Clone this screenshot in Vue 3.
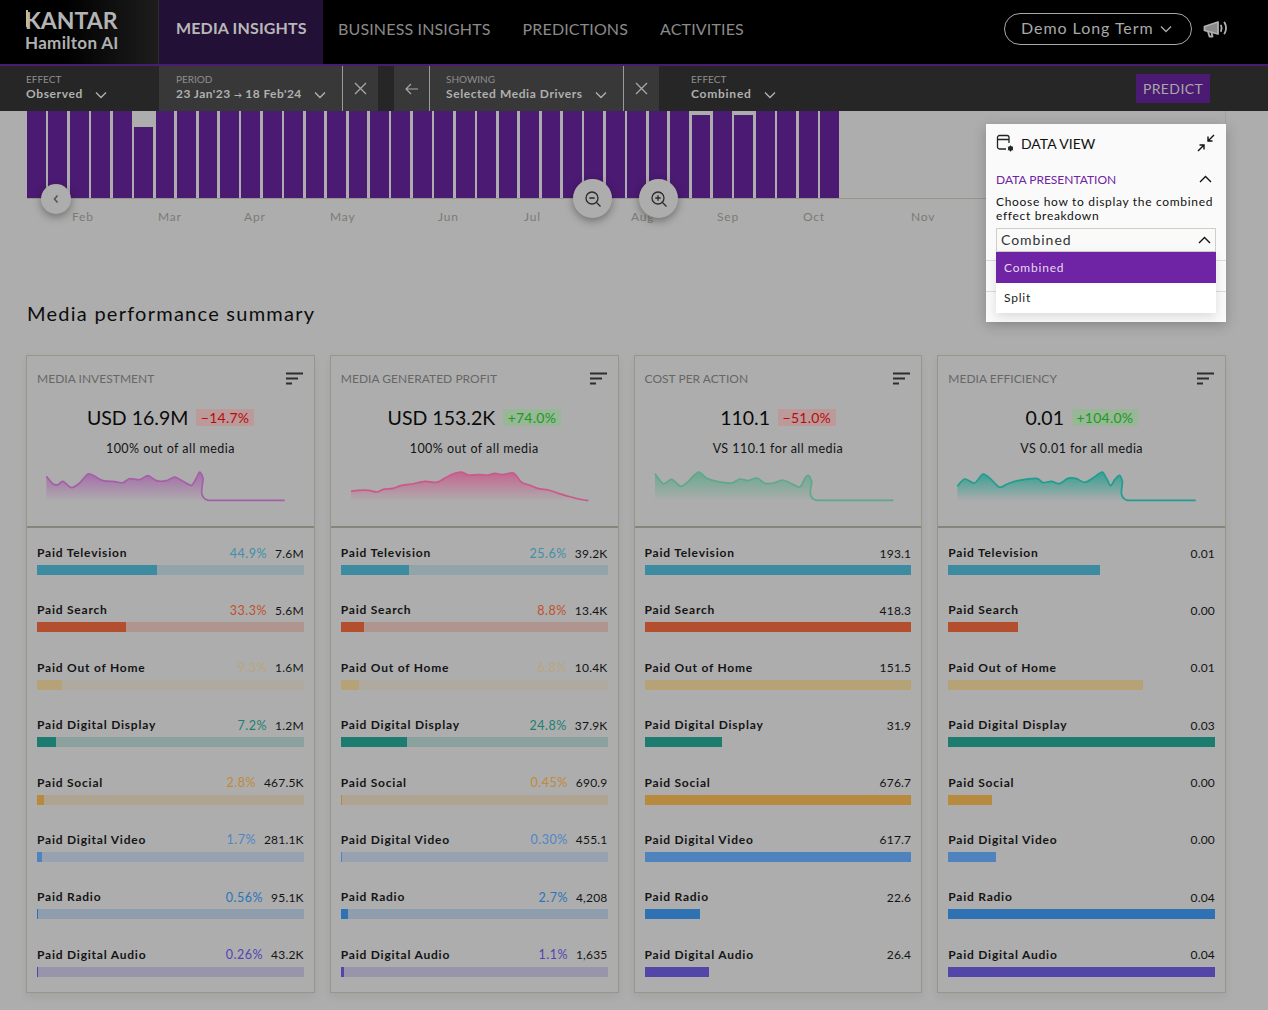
<script setup>
const barTops = { 5: 16, 31: 4, 33: 4 }
const bars = Array.from({ length: 38 }, (_, i) => ({ id: i, top: barTops[i] || 0 }))
const months = [['Feb', 72], ['Mar', 158], ['Apr', 244], ['May', 330], ['Jun', 438], ['Jul', 524], ['Aug', 631], ['Sep', 717], ['Oct', 803], ['Nov', 911]]

const channels = [
  { name: 'Paid Television', c: '#3d8ba1', p: '#4190a9' },
  { name: 'Paid Search', c: '#b34f2e', p: '#c24f2a' },
  { name: 'Paid Out of Home', c: '#b5a277', p: '#b8a67e' },
  { name: 'Paid Digital Display', c: '#1c7c6f', p: '#1b8072' },
  { name: 'Paid Social', c: '#b88a3e', p: '#c08a36' },
  { name: 'Paid Digital Video', c: '#4f83bd', p: '#4f86c6' },
  { name: 'Paid Radio', c: '#2f72b3', p: '#2a74bb' },
  { name: 'Paid Digital Audio', c: '#5246a8', p: '#5244b4' },
]

function smooth(pts) {
  let d = `M${pts[0][0]} ${pts[0][1]}`
  for (let i = 0; i < pts.length - 1; i++) {
    const p0 = pts[i - 1] || pts[i], p1 = pts[i], p2 = pts[i + 1], p3 = pts[i + 2] || p2
    if (p1[1] === 452 && p2[1] === 452) {
      d += ` L${p2[0]} ${p2[1]}`
      continue
    }
    const k = 0.14
    d += ` C${p1[0] + (p2[0] - p0[0]) * k} ${p1[1] + (p2[1] - p0[1]) * k} ${p2[0] - (p3[0] - p1[0]) * k} ${Math.min(452.5, p2[1] - (p3[1] - p1[1]) * k)} ${p2[0]} ${p2[1]}`
  }
  return d
}

const rawCards = [
  {
    title: 'MEDIA INVESTMENT', value: 'USD 16.9M', delta: '−14.7%', up: false, sub: '100% out of all media', x0: 22, color: '#a45fa8',
    pts: [[80,380],[100,403],[115,405],[130,395],[155,414],[180,400],[205,373],[225,380],[250,393],[285,396],[310,399],[330,387],[360,390],[385,378],[410,393],[440,393],[465,382],[490,395],[515,407],[530,385],[540,367],[550,385],[565,452],[795,452]],
    rows: [[44.9,'44.9%','7.6M'],[33.3,'33.3%','5.6M'],[9.3,'9.3%','1.6M'],[7.2,'7.2%','1.2M'],[2.8,'2.8%','467.5K'],[1.7,'1.7%','281.1K'],[0.56,'0.56%','95.1K'],[0.26,'0.26%','43.2K']],
  },
  {
    title: 'MEDIA GENERATED PROFIT', value: 'USD 153.2K', delta: '+74.0%', up: true, sub: '100% out of all media', x0: 18, color: '#c9598a',
    pts: [[78,425],[100,422],[130,422],[155,427],[175,419],[205,416],[230,407],[260,403],[300,395],[335,398],[360,385],[385,372],[410,367],[430,376],[460,375],[490,376],[510,371],[535,375],[565,370],[590,398],[615,407],[640,417],[670,421],[700,431],[730,440],[760,448],[790,453]],
    rows: [[25.6,'25.6%','39.2K'],[8.8,'8.8%','13.4K'],[6.8,'6.8%','10.4K'],[24.8,'24.8%','37.9K'],[0.45,'0.45%','690.9'],[0.3,'0.30%','455.1'],[2.7,'2.7%','4,208'],[1.1,'1.1%','1,635']],
  },
  {
    title: 'COST PER ACTION', value: '110.1', delta: '−51.0%', up: false, sub: 'VS 110.1 for all media', x0: 15, color: '#5fa88a',
    pts: [[75,372],[100,402],[125,389],[152,410],[175,395],[205,367],[230,386],[260,395],[305,400],[330,388],[355,393],[380,385],[405,401],[430,400],[458,391],[485,402],[510,412],[525,385],[535,377],[545,395],[560,452],[790,452]],
    rows: [[100,'','193.1'],[100,'','418.3'],[100,'','151.5'],[29,'','31.9'],[100,'','676.7'],[100,'','617.7'],[20.7,'','22.6'],[24,'','26.4']],
  },
  {
    title: 'MEDIA EFFICIENCY', value: '0.01', delta: '+104.0%', up: true, sub: 'VS 0.01 for all media', x0: 25, color: '#1f9d8e',
    pts: [[83,410],[105,388],[135,400],[160,373],[185,390],[210,413],[235,402],[265,393],[320,386],[340,399],[365,395],[390,402],[415,386],[440,387],[465,398],[490,385],[517,367],[530,385],[543,408],[555,390],[570,377],[578,395],[593,452],[798,452]],
    rows: [[57,'','0.01'],[26,'','0.00'],[73,'','0.01'],[100,'','0.03'],[16.5,'','0.00'],[18,'','0.00'],[100,'','0.04'],[100,'','0.04']],
  },
]

const cards = rawCards.map((c, i) => {
  const line = smooth(c.pts)
  const first = c.pts[0][0], last = c.pts[c.pts.length - 1][0]
  return {
    ...c,
    id: i,
    line,
    area: `${line} L${last} 455 L${first} 455 Z`,
    viewBox: `${c.x0} 340 864 135`,
    rows: c.rows.map((r, j) => ({
      ...channels[j], width: r[0], pct: r[1], val: r[2],
      track: r[1] ? `color-mix(in srgb, ${channels[j].c} 24%, transparent)` : 'transparent',
    })),
  }
})
</script>

<template>
  <div class="page">
    <header class="top">
      <div class="logo">
        <div class="kantar"><span class="k">K</span>ANTAR</div>
        <div class="hamilton">Hamilton AI</div>
      </div>
      <nav class="tabs">
        <a class="tab active">MEDIA INSIGHTS</a>
        <a class="tab">BUSINESS INSIGHTS</a>
        <a class="tab">PREDICTIONS</a>
        <a class="tab">ACTIVITIES</a>
      </nav>
      <div class="top-right">
        <div class="pill">
          <span>Demo Long Term</span>
          <svg width="12" height="8" viewBox="0 0 12 8"><path d="M1 1.500 6 6.500 11 1.500" fill="none" stroke="#a9a9a9" stroke-width="1.400"/></svg>
        </div>
        <svg class="mega" width="25" height="18" viewBox="0 0 25 18" fill="none" stroke="#b0b0b0" stroke-width="1.800" stroke-linejoin="round" stroke-linecap="round">
          <path d="M1.500 6.500 15 2v12L1.500 10.500Z" fill="#8a8a8a"/>
          <path d="M5 11.500 6.500 16.500H9.500L8.500 12.500"/>
          <path d="M18 5.500c1 2 1 3.500 0 5.500"/>
          <path d="M21.500 2.500c2 3.500 2 7.500 0 11"/>
        </svg>
      </div>
    </header>

    <div class="filters">
      <div class="seg seg-effect">
        <div class="lbl">EFFECT</div>
        <div class="val">Observed <svg class="chev" width="12" height="8" viewBox="0 0 12 8"><path d="M1 1.500 6 6.500 11 1.500" fill="none" stroke="#b0b0b0" stroke-width="1.400"/></svg></div>
      </div>
      <div class="seg seg-period">
        <div class="lbl">PERIOD</div>
        <div class="val">23 Jan'23 <span class="arrow">→</span> 18 Feb'24 <svg class="chev" width="12" height="8" viewBox="0 0 12 8"><path d="M1 1.500 6 6.500 11 1.500" fill="none" stroke="#b0b0b0" stroke-width="1.400"/></svg></div>
      </div>
      <div class="iconseg">
        <svg width="13" height="13" viewBox="0 0 13 13"><path d="M1 1 12 12M12 1 1 12" stroke="#a8a8a8" stroke-width="1.300"/></svg>
      </div>
      <div class="gapseg"></div>
      <div class="iconseg withline">
        <svg width="14" height="12" viewBox="0 0 14 12"><path d="M13 6H1M6 1 1 6 6 11" fill="none" stroke="#a8a8a8" stroke-width="1.200"/></svg>
      </div>
      <div class="seg seg-showing">
        <div class="lbl">SHOWING</div>
        <div class="val">Selected Media Drivers <svg class="chev" width="12" height="8" viewBox="0 0 12 8"><path d="M1 1.500 6 6.500 11 1.500" fill="none" stroke="#b0b0b0" stroke-width="1.400"/></svg></div>
      </div>
      <div class="iconseg">
        <svg width="13" height="13" viewBox="0 0 13 13"><path d="M1 1 12 12M12 1 1 12" stroke="#a8a8a8" stroke-width="1.300"/></svg>
      </div>
      <div class="seg seg-combined">
        <div class="lbl">EFFECT</div>
        <div class="val">Combined <svg class="chev" width="12" height="8" viewBox="0 0 12 8"><path d="M1 1.500 6 6.500 11 1.500" fill="none" stroke="#b0b0b0" stroke-width="1.400"/></svg></div>
      </div>
      <button class="predict">PREDICT</button>
    </div>

    <section class="chart">
      <div class="plot">
        <div class="bars">
          <div v-for="b in bars" :key="b.id" class="bar" :style="{ marginTop: b.top + 'px' }"></div>
        </div>
      </div>
      <div class="axis">
        <span v-for="m in months" :key="m[0]" class="tick" :style="{ left: m[1] + 'px' }">{{ m[0] }}</span>
      </div>

      <button class="round back">
        <svg width="8" height="10" viewBox="0 0 8 10"><path d="M5.500 1.500 2.500 5l3 3.500" fill="none" stroke="#555" stroke-width="1.600"/></svg>
      </button>
      <button class="round big zo">
        <svg width="18" height="18" viewBox="0 0 18 18" fill="none" stroke="#2a2a2a" stroke-width="1.300"><circle cx="8" cy="8" r="6"/><path d="M5.300 8h5.400M12.500 12.500 16.500 16.500"/></svg>
      </button>
      <button class="round big zi">
        <svg width="18" height="18" viewBox="0 0 18 18" fill="none" stroke="#2a2a2a" stroke-width="1.300"><circle cx="8" cy="8" r="6"/><path d="M5.300 8h5.400M8 5.300v5.400M12.500 12.500 16.500 16.500"/></svg>
      </button>
    </section>

    <h2 class="section-title">Media performance summary</h2>

    <section class="cards">
      <article v-for="card in cards" :key="card.id" class="card">
        <div class="card-top">
          <div class="card-head">
            <span class="card-title">{{ card.title }}</span>
            <svg width="17" height="13" viewBox="0 0 17 13"><path d="M0 1.500H17M0 6.500H12M0 11.500H6" stroke="#2e2e2e" stroke-width="1.800"/></svg>
          </div>
          <div class="headline">
            <span class="big-val">{{ card.value }}</span>
            <span class="delta" :class="card.up ? 'up' : 'down'">{{ card.delta }}</span>
          </div>
          <div class="sub">{{ card.sub }}</div>
          <svg class="spark" width="288" height="45" :viewBox="card.viewBox">
            <defs>
              <linearGradient :id="'g' + card.id" x1="0" y1="0" x2="0" y2="1">
                <stop offset="0" :stop-color="card.color" stop-opacity="0.85"/>
                <stop offset="1" :stop-color="card.color" stop-opacity="0"/>
              </linearGradient>
            </defs>
            <path :d="card.area" :fill="'url(#g' + card.id + ')'"/>
            <path :d="card.line" fill="none" :stroke="card.color" stroke-width="5"/>
          </svg>
        </div>
        <div class="rows">
          <div v-for="r in card.rows" :key="r.name" class="row">
            <div class="row-text">
              <span class="row-name">{{ r.name }}</span>
              <span class="row-nums">
                <span v-if="r.pct" class="row-pct" :style="{ color: r.p }">{{ r.pct }}</span>
                <span class="row-val">{{ r.val }}</span>
              </span>
            </div>
            <div class="track" :style="{ background: r.track }">
              <div class="fill" :style="{ width: r.width + '%', background: r.c }"></div>
            </div>
          </div>
        </div>
      </article>
    </section>

    <aside class="panel">
      <div class="panel-head">
        <svg width="19" height="19" viewBox="0 0 19 19" fill="none" stroke="#222" stroke-width="1.300">
          <path d="M10 15H3.500A2 2 0 0 1 1.500 13V3.500A2 2 0 0 1 3.500 1.500H11A2 2 0 0 1 13 3.500V9M1.500 5.500H13"/>
          <circle cx="14.500" cy="14.500" r="1.800" fill="#222"/>
          <path d="M14.500 11.500v6M11.900 13l5.200 3M17.100 13l-5.200 3" stroke-width="1"/>
        </svg>
        <span class="panel-title">DATA VIEW</span>
        <svg class="collapse" width="18" height="18" viewBox="0 0 18 18" fill="none" stroke="#111" stroke-width="1.400">
          <path d="M17 1 11 7M11 2.500V7H15.500M1 17l6-6M2.500 11H7V15.500"/>
        </svg>
      </div>
      <div class="panel-sec">
        <span>DATA PRESENTATION</span>
        <svg width="13" height="8" viewBox="0 0 13 8"><path d="M1 7 6.500 1.500 12 7" fill="none" stroke="#111" stroke-width="1.400"/></svg>
      </div>
      <p class="panel-desc">Choose how to display the combined effect breakdown</p>
      <div class="select">
        <span>Combined</span>
        <svg width="13" height="8" viewBox="0 0 13 8"><path d="M1 7 6.500 1.500 12 7" fill="none" stroke="#111" stroke-width="1.400"/></svg>
      </div>
      <div class="sep sep1"></div>
      <div class="sep sep2"></div>
      <ul class="options">
        <li class="option selected">Combined</li>
        <li class="option">Split</li>
      </ul>
    </aside>
  </div>
</template>

<style>
html, body { margin: 0; background: #adadad; }
</style>

<style scoped>
.page {
  position: relative;
  width: 1268px;
  height: 1010px;
  overflow: hidden;
  background: #adadad;
  font-family: Lato, "Noto Sans", sans-serif;
  color: #0c0c0c;
}
.top {
  display: flex;
  align-items: stretch;
  height: 64px;
  background: #000;
  border-bottom: 2px solid #4b1a72;
}
.logo {
  width: 159px;
  flex: none;
  box-sizing: border-box;
  padding: 7px 0 0 25px;
  background: linear-gradient(90deg, #000 40%, #1d1d1d 100%);
  border-right: 1px solid #2c2c2c;
}
.kantar { font-size: 23px; line-height: 26px; color: #b4b4b4; font-weight: 700; letter-spacing: 0; }
.k { position: relative; }
.k::before { content: ""; position: absolute; left: 1px; top: 4px; width: 2px; height: 17px; background: #c8b98c; }
.hamilton { font-size: 17px; line-height: 20px; color: #b0b0b0; font-weight: 700; letter-spacing: 0.3px; }
.tabs { display: flex; align-items: stretch; }
.tab {
  display: flex;
  align-items: center;
  margin-right: 32px;
  font-size: 16px;
  letter-spacing: 0.15px;
  color: #8a8a8a;
  padding-bottom: 8px;
}
.tab.active {
  width: 131px;
  flex: none;
  margin: 0 15px 0 0;
  padding: 0 16px 9px 17px;
  background: #231036;
  color: #b8b8b8;
  font-weight: 700;
  letter-spacing: 0.15px;
  white-space: nowrap;
}
.top-right { margin-left: auto; display: flex; align-items: center; padding: 0 40px 6px 0; gap: 11px; }
.pill {
  display: flex;
  align-items: center;
  justify-content: space-between;
  box-sizing: border-box;
  width: 188px;
  height: 32px;
  padding: 0 19px 3px 16px;
  border: 1px solid #a8a8a8;
  border-radius: 16px;
  color: #a9a9a9;
  font-size: 16px;
  letter-spacing: 0.95px;
}
.pill svg { margin-top: 3px; }
.mega { display: block; }

.filters {
  display: flex;
  align-items: stretch;
  height: 45px;
  background: #262626;
  color: #b0b0b0;
}
.seg { box-sizing: border-box; padding-top: 7px; }
.lbl { font-size: 10px; line-height: 12px; letter-spacing: 0; color: #8e8e8e; }
.val { font-size: 12px; line-height: 17px; font-weight: 700; letter-spacing: 0.62px; white-space: nowrap; color: #b0b0b0; }
.arrow { font-size: 8px; letter-spacing: 0; }
.chev { margin-left: 9px; vertical-align: -1px; }
.seg-effect { width: 159px; padding-left: 26px; }
.seg-period { width: 184px; padding-left: 17px; background: #383838; border-right: 1px solid #9a9a9a; }
.seg-period .val { letter-spacing: 0.44px; }
.iconseg { width: 35px; display: flex; align-items: center; justify-content: center; background: #383838; box-sizing: border-box; }
.iconseg.withline { width: 36px; border-right: 1px solid #9a9a9a; }
.gapseg { width: 16px; background: #262626; }
.seg-showing { width: 194px; padding-left: 16px; background: #383838; border-right: 1px solid #9a9a9a; }
.seg-showing .val { letter-spacing: 0.58px; }
.seg-combined { padding-left: 32px; }
.seg-combined .val { letter-spacing: 0.75px; }
.predict {
  margin: 8px 58px 8px auto;
  width: 74px;
  border: 0;
  background: #4b1a72;
  color: #a8a8a8;
  font: 400 14px Lato, sans-serif;
  letter-spacing: 0.4px;
}

.chart {
  position: relative;
  height: 130px;
  margin-right: 42px;
}
.plot {
  height: 87px;
  margin-left: 27px;
  border-bottom: 1px solid #96968a;
  position: relative;
}
.plot::after { content: ""; position: absolute; right: 0; top: 0; bottom: -1px; width: 1px; background: #a0a0a0; }
.bars { display: flex; gap: 2.700px; width: 812px; height: 87px; }
.bar { flex: 1; background: #4b1a72; }
.axis { position: relative; height: 30px; }
.tick { position: absolute; top: 10px; font-size: 12px; line-height: 16px; letter-spacing: 0.8px; color: #7b7b73; }
.round {
  position: absolute;
  display: flex;
  align-items: center;
  justify-content: center;
  padding: 0;
  border: 0;
  border-radius: 50%;
  background: #adadad;
  width: 30px;
  height: 30px;
  box-shadow: 0 3px 8px rgba(0, 0, 0, 0.35);
}
.round.big { width: 39px; height: 39px; top: 68px; }
.back { left: 41px; top: 73px; }
.zo { left: 573px; }
.zi { left: 639px; }

.section-title {
  margin: 0;
  padding: 61px 0 0 27px;
  font-size: 20px;
  line-height: 22px;
  font-weight: 400;
  letter-spacing: 1.25px;
}

.cards {
  display: grid;
  grid-template-columns: repeat(4, 288.750px);
  column-gap: 15px;
  padding: 31px 0 0 26px;
}
.card {
  box-sizing: border-box;
  height: 638px;
  border: 1px solid #96968a;
  box-shadow: 0 4px 8px rgba(0, 0, 0, 0.06);
}
.card-top { height: 172px; box-sizing: border-box; border-bottom: 2px solid #85857a; }
.card-head {
  display: flex;
  align-items: center;
  justify-content: space-between;
  padding: 15px 11px 0 10px;
  height: 15px;
}
.card-title { font-size: 12px; line-height: 15px; color: #676767; letter-spacing: 0.03px; }
.headline {
  display: flex;
  align-items: center;
  justify-content: center;
  gap: 8px;
  margin-top: 20px;
  height: 24px;
}
.big-val { font-size: 19.500px; line-height: 24px; color: #0a0a0a; }
.delta { font-size: 14px; line-height: 17px; padding: 0 4.500px; letter-spacing: 0.25px; margin-top: -2px; }
.delta.down { background: #bd9a9a; color: #b40d0d; }
.delta.up { background: #97b797; color: #1f991f; }
.sub { text-align: center; margin-top: 11px; font-size: 12.500px; line-height: 16px; letter-spacing: 0.45px; color: #141414; }
.spark { display: block; margin-top: 6px; }
.rows { padding: 16px 10px 0; }
.row { height: 57.400px; }
.row-text { display: flex; justify-content: space-between; align-items: center; height: 18px; }
.row-name { font-size: 12px; line-height: 16px; font-weight: 700; letter-spacing: 0.78px; color: #141414; }
.row-nums { display: flex; gap: 8px; font-size: 12px; line-height: 16px; letter-spacing: 0.2px; margin-top: 1px; }
.row-pct { font-size: 12.500px; letter-spacing: 0.5px; }
.row-val { color: #141414; }
.track { height: 10px; margin-top: 3px; }
.fill { height: 100%; min-width: 1px; }

.panel {
  position: absolute;
  left: 986px;
  top: 124px;
  width: 240px;
  height: 198px;
  box-sizing: border-box;
  padding: 0 10px;
  background: #fafafa;
  box-shadow: 0 3px 12px rgba(0, 0, 0, 0.22);
}
.panel-head { display: flex; align-items: center; height: 38px; box-sizing: border-box; }
.panel-title { margin-left: 6px; font-size: 14px; letter-spacing: 0; color: #111; }
.collapse { margin-left: auto; margin-right: 1px; }
.panel-sec {
  display: flex;
  align-items: center;
  justify-content: space-between;
  margin-top: 9px;
  height: 16px;
  padding-right: 4px;
  font-size: 12px;
  color: #6f23a5;
}
.panel-desc { margin: 8px 0 0; font-size: 12px; line-height: 14px; letter-spacing: 0.68px; color: #111; }
.select {
  display: flex;
  align-items: center;
  justify-content: space-between;
  box-sizing: border-box;
  height: 24px;
  margin-top: 5px;
  padding: 0 4px 1px 4px;
  border: 1px solid #cfcfc4;
  font-size: 14px;
  letter-spacing: 0.95px;
  color: #333;
}
.sep { position: absolute; left: 0; right: 0; height: 1px; background: #dcdcd6; }
.sep1 { top: 136px; }
.sep2 { top: 167px; }
.options {
  position: absolute;
  left: 10px;
  top: 128px;
  width: 220px;
  margin: 0;
  padding: 0;
  list-style: none;
  background: #fff;
  box-shadow: 0 4px 10px rgba(0, 0, 0, 0.12);
}
.option { height: 30.500px; line-height: 30.500px; padding-left: 8px; font-size: 12px; letter-spacing: 0.8px; color: #222; }
.option.selected { background: #6f23a5; color: #e6daf0; line-height: 32px; }
</style>
